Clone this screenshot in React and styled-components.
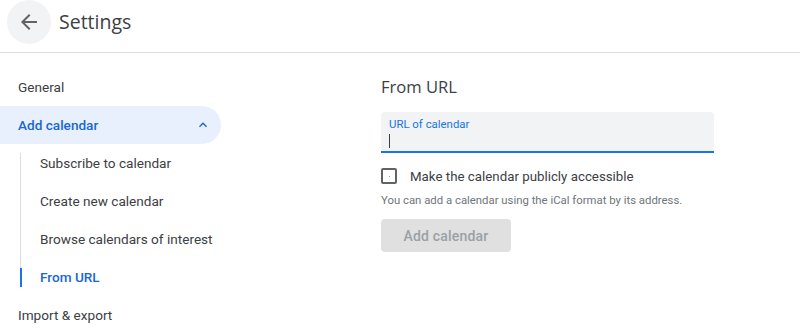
import React from "react";
import styled, { createGlobalStyle } from "styled-components";

const GlobalStyle = createGlobalStyle`
  body {
    margin: 0;
    background: #fff;
    font-family: Roboto, "Liberation Sans", Arial, sans-serif;
    color: #3c4043;
  }
`;

const Page = styled.div`
  width: 800px;
  height: 336px;
  overflow: hidden;
`;

const Header = styled.header`
  height: 52px;
  display: flex;
  align-items: flex-start;
  border-bottom: 1px solid #dadce0;
`;

const BackButton = styled.button`
  width: 44px;
  height: 44px;
  margin-left: 7px;
  border: none;
  border-radius: 50%;
  background: #f1f3f4;
  display: flex;
  align-items: center;
  justify-content: center;
  padding: 0;
  color: #5f6368;
`;

const Title = styled.h1`
  margin: 0 0 0 8px;
  font-family: "Open Sans", Roboto, sans-serif;
  font-size: 19.5px;
  font-weight: 400;
  line-height: 44px;
  color: #3c4043;
`;

const Main = styled.div`
  display: flex;
`;

const Sidebar = styled.nav`
  width: 221px;
  padding-top: 15px;
  flex-shrink: 0;
`;

const NavItem = styled.div`
  height: 38px;
  display: flex;
  align-items: center;
  justify-content: space-between;
  padding: 0 10px 0 18px;
  font-size: 13.6px;
  color: ${(p) => (p.$active ? "#1967d2" : "#3c4043")};
  font-weight: ${(p) => (p.$active ? 500 : 400)};
  background: ${(p) => (p.$active ? "#e8f0fe" : "transparent")};
  border-radius: 0 19px 19px 0;
`;

const SubList = styled.div`
  position: relative;
  &::before {
    content: "";
    position: absolute;
    left: 20px;
    top: 9px;
    bottom: 10px;
    width: 1px;
    background: #dadce0;
  }
`;

const SubItem = styled.div`
  position: relative;
  height: 38px;
  display: flex;
  align-items: center;
  padding-left: 40px;
  font-size: 13.6px;
  color: ${(p) => (p.$active ? "#1967d2" : "#3c4043")};
  font-weight: ${(p) => (p.$active ? 500 : 400)};
  &::before {
    content: "";
    display: ${(p) => (p.$active ? "block" : "none")};
    position: absolute;
    left: 20px;
    top: 10px;
    width: 2px;
    height: 19px;
    background: #1a73e8;
  }
`;

const Content = styled.section`
  margin-left: 160px;
  padding-top: 22px;
  width: 333px;
`;

const SectionTitle = styled.h2`
  margin: 0 0 13px;
  font-family: "Open Sans", Roboto, sans-serif;
  font-size: 16.6px;
  font-weight: 400;
  line-height: 24px;
  color: #3c4043;
`;

const Field = styled.div`
  background: #f1f3f4;
  border-radius: 4px 4px 0 0;
  border-bottom: 2px solid #1a73e8;
  padding: 6px 8px 0;
  box-sizing: content-box;
  height: 33px;
`;

const FieldLabel = styled.div`
  font-size: 11.4px;
  line-height: 13px;
  color: #1a73e8;
`;

const Caret = styled.div`
  width: 1px;
  height: 14px;
  margin-top: 3px;
  background: #3c4043;
`;

const CheckRow = styled.label`
  display: flex;
  align-items: center;
  gap: 13px;
  margin-top: 13px;
  height: 20px;
  font-size: 13.3px;
  color: #3c4043;
`;

const Box = styled.span`
  width: 16px;
  height: 16px;
  box-sizing: border-box;
  border: 2px solid #5f6368;
  border-radius: 2px;
  display: flex;
  align-items: center;
  justify-content: center;
  &::after {
    content: "";
    width: 1px;
    height: 1px;
    background: #9aa0a6;
  }
`;

const Helper = styled.p`
  margin: 6px 0 0;
  font-size: 11.35px;
  line-height: 16px;
  color: #70757a;
`;

const AddButton = styled.button`
  margin-top: 11px;
  width: 130px;
  height: 33px;
  border: none;
  border-radius: 4px;
  background: #e0e0e0;
  color: #9aa0a6;
  font-family: Roboto, sans-serif;
  font-size: 14px;
  font-weight: 500;
  letter-spacing: 0.2px;
`;

export default function App() {
  return (
    <Page>
      <GlobalStyle />
      <Header>
        <BackButton aria-label="Back">
          <svg width="24" height="24" viewBox="0 0 24 24" fill="currentColor">
            <path d="M20 11H7.83l5.59-5.59L12 4l-8 8 8 8 1.41-1.41L7.83 13H20v-2z" />
          </svg>
        </BackButton>
        <Title>Settings</Title>
      </Header>
      <Main>
        <Sidebar>
          <NavItem>General</NavItem>
          <NavItem $active>
            Add calendar
            <svg width="16" height="16" viewBox="0 0 24 24" fill="#1967d2">
              <path d="M12 8l-6 6 1.41 1.41L12 10.83l4.59 4.58L18 14z" />
            </svg>
          </NavItem>
          <SubList>
            <SubItem>Subscribe to calendar</SubItem>
            <SubItem>Create new calendar</SubItem>
            <SubItem>Browse calendars of interest</SubItem>
            <SubItem $active>From URL</SubItem>
          </SubList>
          <NavItem>Import &amp; export</NavItem>
        </Sidebar>
        <Content>
          <SectionTitle>From URL</SectionTitle>
          <Field>
            <FieldLabel>URL of calendar</FieldLabel>
            <Caret />
          </Field>
          <CheckRow>
            <Box />
            Make the calendar publicly accessible
          </CheckRow>
          <Helper>You can add a calendar using the iCal format by its address.</Helper>
          <AddButton disabled>Add calendar</AddButton>
        </Content>
      </Main>
    </Page>
  );
}
